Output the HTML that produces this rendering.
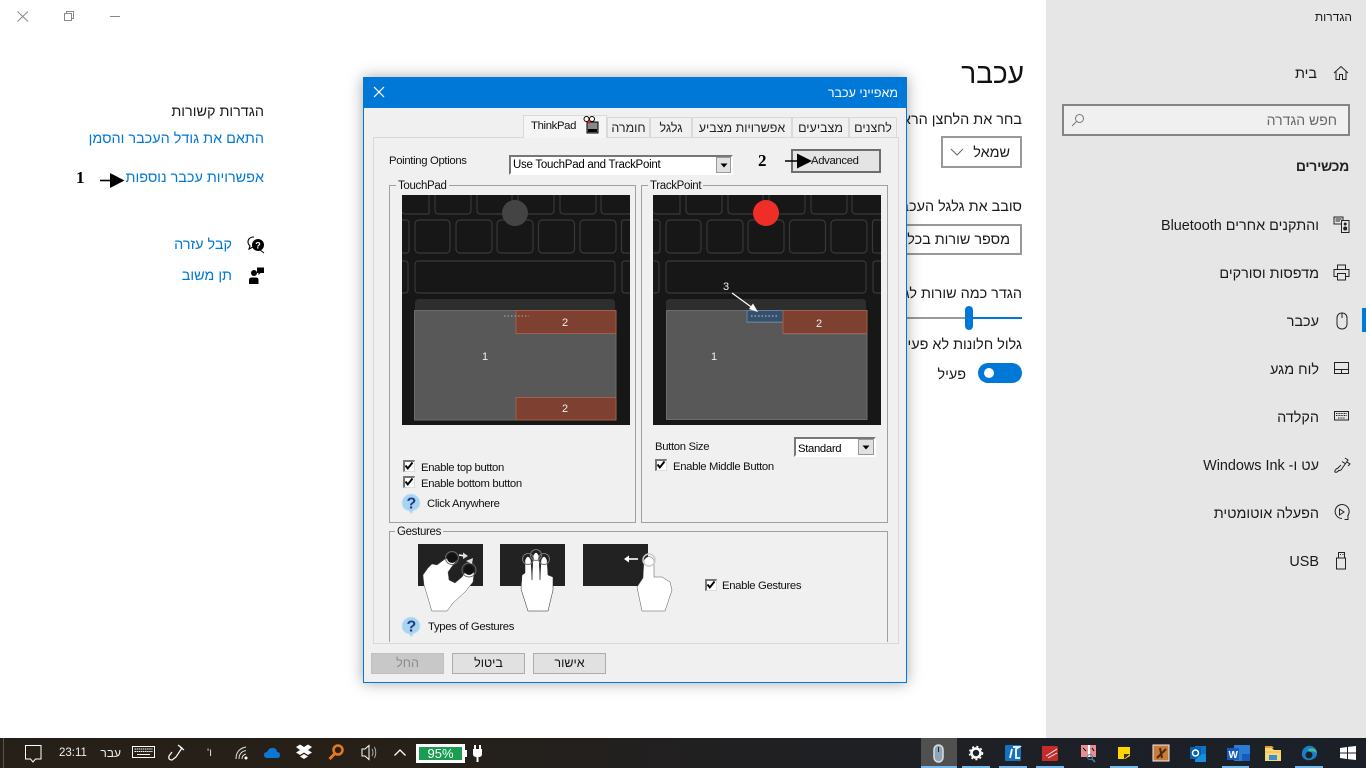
<!DOCTYPE html>
<html lang="he"><head><meta charset="utf-8"><title>הגדרות</title>
<style>
html,body{margin:0;padding:0;width:1366px;height:768px;overflow:hidden;background:#fff}
body{position:relative;font-family:"Liberation Sans","Noto Sans CJK JP",sans-serif;color:#1a1a1a}
.a{position:absolute}
.r,.l{position:absolute;white-space:nowrap;line-height:20px;height:20px}
.r{direction:rtl}
.s{font-size:14.4px;line-height:22px;height:22px}
.b{color:#0078d7}
.d{font-size:11.3px;color:#111;letter-spacing:-.33px;line-height:24px;height:24px}
svg{position:absolute;overflow:visible}
.tab{position:absolute;top:117px;height:20px;background:#f0f0f0;border:1px solid #d9d9d9;border-bottom:0;box-sizing:border-box;font-size:12.5px;line-height:21px;text-align:center;direction:rtl;color:#222;white-space:nowrap}
.grp{position:absolute;border:1px solid #a0a0a0;box-sizing:border-box}
.gl{position:absolute;background:#f0f0f0;font-size:11.5px;line-height:15px;height:15px;padding:1px 2px 0;box-sizing:content-box;color:#111;letter-spacing:-.33px}
.cb{position:absolute;width:12px;height:12px;background:#fff;border:1px solid #777;border-top-width:2px;border-left-width:2px;border-right-color:#ddd;border-bottom-color:#ddd;box-sizing:border-box}
.cb svg{left:-2px;top:-2px}
.btn{position:absolute;top:653px;height:21px;width:73px;background:#e1e1e1;border:1px solid #adadad;box-sizing:border-box;font-size:12.5px;line-height:19px;text-align:center;direction:rtl;color:#111}
.ul{position:absolute;top:766px;height:2px;background:#76b9ed}
</style></head><body>
<svg width="0" height="0" style="position:absolute"><defs>
<g id="kb">
<rect width="228" height="230" fill="#171717"/>
<g fill="none" stroke="#383838" stroke-width="1.2">
<path d="M-1,-2V14Q-1,19 4,19H27V-2"/>
<path d="M33,-2V15Q33,19 37,19H65Q69,19 69,15V-2"/>
<path d="M75,-2V15Q75,19 79,19H106Q110,19 110,15V-2"/>
<path d="M116,-2V15Q116,19 120,19H148Q152,19 152,15V-2"/>
<path d="M158,-2V15Q158,19 162,19H190Q194,19 194,15V-2"/>
<path d="M199,-2V15Q199,19 203,19H230"/>
<path d="M-1,25H4Q7,25 7,28V55Q7,58 4,58H-1"/>
<rect x="13" y="25" width="35" height="33" rx="4"/>
<rect x="54" y="25" width="36" height="33" rx="4"/>
<rect x="95" y="25" width="36" height="33" rx="4"/>
<rect x="136.500" y="25" width="36" height="33" rx="4"/>
<rect x="178" y="25" width="36" height="33" rx="4"/>
<path d="M230,25H222Q219.500,25 219.500,28V55Q219.500,58 222,58H230"/>
<path d="M-1,66H3Q6,66 6,69V95Q6,98 3,98H-1"/>
<rect x="13" y="66" width="200" height="32" rx="3"/>
<path d="M230,66H223Q220,66 220,69V95Q220,98 223,98H230"/>
</g>
<path d="M13,118V108Q13,104 17,104H209Q213,104 213,108V118Z" fill="#2e2e2e"/>
</g>
<g id="q"><path d="M10,1C15,1 19,5 19,10C19,15 15,17 12,18L10.500,21L8,18C3,17 1,14 1,10C1,5 5,1 10,1Z" fill="#a8d4f0" stroke="#cfe6f5" stroke-width=".8"/><text x="5.500" y="15.500" font-family="Liberation Sans" font-weight="bold" font-size="16" fill="#1f3b8c">?</text></g>
<g id="ck"><path d="M2.500,5.500L4.800,8.500L9.500,2.500" fill="none" stroke="#000" stroke-width="1.900"/></g>
</defs></svg>

<!-- window controls -->
<svg style="left:0;top:0" width="130" height="30"><g fill="none" stroke="#8a8a8a"><path d="M17.500,11.500L28,21.500M28,11.500L17.500,21.500"/><rect x="64.500" y="13.500" width="7" height="7"/><path d="M66.500,13.500V11.500H73.500V18.500H71.500"/><path d="M110,16.500H120"/></g></svg>

<!-- related settings -->
<div class="r s" style="right:1102px;top:101px">הגדרות קשורות</div>
<div class="r s b" style="right:1102px;top:128px">התאם את גודל העכבר והסמן</div>
<div class="r s b" style="right:1102px;top:167px">אפשרויות עכבר נוספות</div>
<div class="l" style="left:76px;top:168px;font:bold 17px/20px 'Liberation Serif',serif;color:#000">1</div>
<svg style="left:0;top:0" width="130" height="200"><path d="M100,180.500H112" stroke="#000" stroke-width="1.600"/><path d="M110,173L124.500,180.500L110,188Z"/></svg>
<div class="r s b" style="right:1134px;top:234px">קבל עזרה</div>
<div class="r s b" style="right:1134px;top:265px">תן משוב</div>
<svg style="left:247px;top:236px" width="18" height="18"><path d="M7,1C3,1 1,3 1,6C1,8 2,9 3,10L2,13L6,11" fill="none" stroke="#000" stroke-width="1.100"/><circle cx="11" cy="9" r="6" fill="#000"/><text x="8.300" y="12.500" font-size="9" font-weight="bold" fill="#fff" font-family="Liberation Sans">?</text><path d="M13,14L17,17" stroke="#000"/></svg>
<svg style="left:248px;top:267px" width="18" height="18"><circle cx="6" cy="6" r="3" fill="#000"/><path d="M1,17V13Q1,10.500 4,10.500H8Q10.500,10.500 10.500,13V17Z" fill="#000"/><path d="M9,.5H16V6H12.500L10.500,8V6H9Z" fill="#000"/></svg>

<!-- main content -->
<div class="r" style="right:342px;top:58px;font-size:28px;line-height:32px;height:32px;color:#111">עכבר</div>
<div class="r s" style="right:344px;top:109px">בחר את הלחצן הראשי שלך</div>
<div class="a" style="left:941px;top:136px;width:81px;height:32px;border:2px solid #999;box-sizing:border-box"></div>
<div class="r s" style="right:356px;top:142px">שמאל</div>
<svg style="left:950px;top:148px" width="14" height="8"><path d="M1,1L7,7L13,1" fill="none" stroke="#666" stroke-width="1"/></svg>
<div class="r s" style="right:344px;top:196px">סובב את גלגל העכבר כדי לגלול</div>
<div class="a" style="left:800px;top:224px;width:222px;height:31px;border:2px solid #999;box-sizing:border-box"></div>
<div class="r s" style="right:356px;top:229px">מספר שורות בכל פעם</div>
<div class="r s" style="right:344px;top:283px">הגדר כמה שורות לגלול בכל פעם</div>
<div class="a" style="left:800px;top:317px;width:169px;height:2px;background:#999"></div>
<div class="a" style="left:969px;top:317px;width:53px;height:2px;background:#0078d7"></div>
<div class="a" style="left:965px;top:306px;width:8px;height:24px;background:#0078d7;border-radius:4px"></div>
<div class="r s" style="right:344px;top:334px">גלול חלונות לא פעילים בעת ריחוף</div>
<div class="a" style="left:978px;top:363px;width:44px;height:20px;background:#0078d7;border-radius:10px"></div>
<div class="a" style="left:984px;top:368px;width:10px;height:10px;background:#fff;border-radius:5px"></div>
<div class="r s" style="right:400px;top:364px">פעיל</div>

<!-- sidebar -->
<div class="a" style="left:1046px;top:0;width:320px;height:738px;background:#e6e6e6"></div>
<div class="r" style="right:14px;top:7px;font-size:12px">הגדרות</div>
<svg style="left:1333px;top:65px" width="16" height="16"><path d="M1,8L8,1.500L15,8M3,6.500V14.500H6.500V9.500H9.500V14.500H13V6.500" fill="none" stroke="#222"/></svg>
<div class="r s" style="right:49px;top:63px">בית</div>
<div class="a" style="left:1062px;top:104px;width:288px;height:32px;background:#f0f0f0;border:2px solid #858585;box-sizing:border-box"></div>
<div class="r" style="right:29px;top:110px;font-size:14px;color:#666">חפש הגדרה</div>
<svg style="left:1071px;top:113px" width="14" height="14"><circle cx="8.500" cy="5.500" r="4" fill="none" stroke="#777"/><path d="M5.500,8.500L1,13" stroke="#777"/></svg>
<div class="r" style="right:17px;top:156px;font-size:14px;letter-spacing:-.3px;font-weight:bold;color:#222">מכשירים</div>

<div class="r s" style="right:47px;top:215px">והתקנים אחרים Bluetooth</div>
<div class="r s" style="right:47px;top:263px">מדפסות וסורקים</div>
<div class="r s" style="right:47px;top:311px">עכבר</div>
<div class="r s" style="right:47px;top:359px">לוח מגע</div>
<div class="r s" style="right:47px;top:407px">הקלדה</div>
<div class="r s" style="right:47px;top:455px">עט ו- Windows Ink</div>
<div class="r s" style="right:47px;top:503px">הפעלה אוטומטית</div>
<div class="r s" style="right:47px;top:551px">USB</div>
<div class="a" style="left:1362px;top:308px;width:4px;height:24px;background:#0078d7"></div>
<svg style="left:1333px;top:216px" width="17" height="18"><g fill="none" stroke="#222"><path d="M1,1H10V8H1Z"/><rect x="8.500" y="4.500" width="7.500" height="12" fill="#e6e6e6"/><circle cx="12.200" cy="8" r="1" fill="#222"/><circle cx="12.200" cy="12.500" r="1.500" fill="#222"/></g><path d="M2.500,3H8.500M2.500,5H7" stroke="#222"/></svg>
<svg style="left:1333px;top:264px" width="17" height="17"><g fill="none" stroke="#222"><path d="M4.500,5.500V1H12.500V5.500M4,12.500H1V5.500H16V12.500H13"/><rect x="4.500" y="9.500" width="8" height="6.500"/></g></svg>
<svg style="left:1335px;top:312px" width="14" height="18"><path d="M7,1C10,1 12,3 12,6V12C12,15 10,17 7,17C4,17 2,15 2,12V6C2,3 4,1 7,1ZM7,1V6" fill="none" stroke="#222"/></svg>
<svg style="left:1333px;top:361px" width="17" height="14"><path d="M1.500,1.500H15.500V12.500H1.500ZM1.500,8.500H15.500M8.500,8.500V12.500" fill="none" stroke="#222"/></svg>
<svg style="left:1333px;top:410px" width="17" height="12"><rect x="1.500" y="1.500" width="14" height="8.500" fill="none" stroke="#222"/><path d="M3,3.500H14M3,5.500H14M5,8H12" stroke="#222" stroke-dasharray="1 .6"/></svg>
<svg style="left:1333px;top:456px" width="17" height="18"><path d="M12,2L15,4L8,14L5,15M9,5.500L12,7.500M8,9L5,12Q1,14 2,16Q4,17 6,14M14,6L17,8L15,10" fill="none" stroke="#222"/></svg>
<svg style="left:1333px;top:504px" width="17" height="18"><path d="M9,14.500A7,7 0 1 1 14.500,12M11.500,15.500L15,15.500V11.500" fill="none" stroke="#222"/><path d="M6.500,5L11,8L6.500,11Z" fill="none" stroke="#222"/></svg>
<svg style="left:1335px;top:552px" width="12" height="18"><path d="M3.500,.5H9.500V6H3.500ZM1.500,6H10.500V17H1.500Z" fill="none" stroke="#222"/><path d="M5,2.500H6M7.500,2.500H8.500" stroke="#222"/></svg>

<!-- dialog -->
<div class="a" style="left:363px;top:77px;width:544px;height:606px;background:#f0f0f0;border:1px solid #0078d7;box-sizing:border-box;box-shadow:0 0 14px rgba(0,0,0,.35)"></div>
<div class="a" style="left:364px;top:78px;width:543px;height:30px;background:#0078d7"></div>
<svg style="left:373px;top:86px" width="12" height="12"><path d="M1,1L11,11M11,1L1,11" stroke="#fff" stroke-width="1.200"/></svg>
<div class="r" style="right:468px;top:83px;font-size:12.500px;color:#fff">מאפייני עכבר</div>

<div class="a" style="left:373px;top:137px;width:526px;height:507px;background:#f5f5f5;border:1px solid #d9d9d9;box-sizing:border-box"></div>
<div class="tab" style="left:849px;width:48px">לחצנים</div>
<div class="tab" style="left:792px;width:57px">מצביעים</div>
<div class="tab" style="left:692px;width:100px">אפשרויות מצביע</div>
<div class="tab" style="left:650px;width:42px">גלגל</div>
<div class="tab" style="left:607px;width:43px">חומרה</div>
<div class="a" style="left:523px;top:115px;width:84px;height:23px;background:#f5f5f5;border:1px solid #d9d9d9;border-bottom:0;box-sizing:border-box"></div>
<div class="l d" style="left:531px;top:114px">ThinkPad</div>
<svg style="left:583px;top:116px" width="18" height="18"><rect x="4" y="6" width="11" height="11" fill="#888" stroke="#000"/><circle cx="3.500" cy="3" r="2.500" fill="#fff" stroke="#000"/><circle cx="9" cy="3" r="2.500" fill="#fff" stroke="#000"/><circle cx="6" cy="6" r="1.500" fill="#e02020"/><rect x="5" y="13" width="9" height="3" fill="#000"/></svg>

<div class="a" style="left:374px;top:138px;width:524px;height:505px;background:#f0f0f0"></div>
<div class="l d" style="left:389px;top:149px">Pointing Options</div>
<div class="a" style="left:509px;top:155px;width:224px;height:20px;background:#fff;border:2px solid;border-color:#777 #fff #fff #777;box-sizing:border-box"></div>
<div class="l d" style="left:513px;top:153px;color:#000;font-size:11.500px;letter-spacing:-.26px">Use TouchPad and TrackPoint</div>
<div class="a" style="left:716px;top:157px;width:15px;height:16px;background:#e1e1e1;border:1px solid #999;box-sizing:border-box"></div>
<svg style="left:716px;top:157px" width="16" height="16"><path d="M4.500,6.500H11.500L8,10.500Z"/></svg>
<div class="l" style="left:758px;top:151px;font:bold 17px/20px 'Liberation Serif',serif;color:#000">2</div>
<div class="a" style="left:791px;top:149px;width:90px;height:24px;background:#e4e4e4;border:2px solid #6e6e6e;box-sizing:border-box"></div>
<div class="l d" style="left:811px;top:149px">Advanced</div>
<svg style="left:780px;top:150px" width="40" height="22"><path d="M5,11H20" stroke="#000" stroke-width="1.500"/><path d="M17,3.500L32,11L17,18.500Z"/></svg>

<!-- TouchPad group -->
<div class="grp" style="left:389px;top:185px;width:247px;height:338px"></div>
<div class="gl" style="left:396px;top:178px">TouchPad</div>
<svg style="left:402px;top:195px" width="228" height="230" viewBox="0 0 228 230"><svg width="228" height="230" style="overflow:hidden;position:static"><use href="#kb"/>
<circle cx="113" cy="18" r="13" fill="#444"/>
<path d="M12.500,115.500H214V225H12.500Z" fill="#595858" stroke="#6c6c6c"/>
<rect x="114" y="115.500" width="100" height="23" fill="#7e4030" stroke="#a0604a"/>
<rect x="114" y="202.500" width="100" height="22.500" fill="#7e4030" stroke="#a0604a"/>
<path d="M102,121H127" stroke="#aaa" stroke-dasharray="1.500 2"/>
<g fill="#eee" font-size="11" font-family="Liberation Sans"><text x="80" y="165">1</text><text x="160" y="131">2</text><text x="160" y="217">2</text></g></svg></svg>
<div class="cb" style="left:403px;top:460px"><svg width="12" height="12"><use href="#ck"/></svg></div>
<div class="l d" style="left:421px;top:456px">Enable top button</div>
<div class="cb" style="left:403px;top:476px"><svg width="12" height="12"><use href="#ck"/></svg></div>
<div class="l d" style="left:421px;top:472px">Enable bottom button</div>
<svg style="left:401px;top:493px" width="20" height="22"><use href="#q"/></svg>
<div class="l d" style="left:427px;top:492px">Click Anywhere</div>

<!-- TrackPoint group -->
<div class="grp" style="left:641px;top:185px;width:247px;height:338px"></div>
<div class="gl" style="left:648px;top:178px">TrackPoint</div>
<svg style="left:653px;top:195px" width="228" height="230" viewBox="0 0 228 230"><svg width="228" height="230" style="overflow:hidden;position:static"><use href="#kb"/>
<circle cx="113" cy="18" r="13" fill="#ef2e28"/>
<path d="M13.500,115.500H94V127.500H130V139H214V224.500H13.500Z" fill="#595858" stroke="#6c6c6c"/>
<rect x="94" y="115.500" width="36" height="11.500" fill="#34506e" stroke="#6a7f96"/>
<rect x="130" y="115.500" width="84" height="23" fill="#7e4030" stroke="#a0604a"/>
<path d="M98,121H124" stroke="#ccc" stroke-dasharray="1.500 2"/>
<path d="M79,98L101,114" stroke="#fff" stroke-width="1.200"/><path d="M105,117L96,114L100,108.500Z" fill="#fff"/>
<g fill="#eee" font-size="11" font-family="Liberation Sans"><text x="58" y="165">1</text><text x="163" y="132">2</text><text x="70" y="95">3</text></g></svg></svg>
<div class="l d" style="left:655px;top:435px">Button Size</div>
<div class="a" style="left:794px;top:437px;width:82px;height:20px;background:#fff;border:2px solid;border-color:#777 #fff #fff #777;box-sizing:border-box"></div>
<div class="l d" style="left:798px;top:437px;color:#000">Standard</div>
<div class="a" style="left:858px;top:439px;width:16px;height:16px;background:#e1e1e1;border:1px solid #999;box-sizing:border-box"></div>
<svg style="left:858px;top:439px" width="16" height="16"><path d="M4.500,6.500H11.500L8,10.500Z"/></svg>
<div class="cb" style="left:655px;top:459px"><svg width="12" height="12"><use href="#ck"/></svg></div>
<div class="l d" style="left:673px;top:455px">Enable Middle Button</div>

<!-- Gestures group -->
<div class="a" style="left:389px;top:531px;width:499px;height:111px;border:1px solid #a0a0a0;border-bottom:0;box-sizing:border-box"></div>
<div class="gl" style="left:395px;top:524px">Gestures</div>
<div class="a" style="left:418px;top:544px;width:65px;height:42px;background:#222"></div>
<div class="a" style="left:500px;top:544px;width:65px;height:42px;background:#222"></div>
<div class="a" style="left:583px;top:544px;width:65px;height:42px;background:#222"></div>
<svg style="left:400px;top:535px" width="290" height="80" viewBox="400 535 290 80">
<g fill="#fff" stroke="#555" stroke-width=".5">
<path d="M431.700,611L428,598L424,585L423,575L428,568L432,564L437,565L445,559L453,557L457,560L453,565L448,572L449,580L455,583L462,577L468,568L474,573L473,582L465,592L453,603L447,611Z"/>
<path d="M528,611L521,589L522,575L525,573L525,560Q528,553 531,560L532,580L533,556Q536,549 539,556L540,580L541,560Q544,553 547,560L548,575L553,577L553,590L548,611Z" stroke="#222"/>
<path d="M642,611L637,587L643,578L644,560Q649,553 654,560L654,577L662,577L670,582L672,590L665,611Z"/>
</g>
<g fill="none">
<circle cx="452" cy="558" r="6.500" stroke="#666"/><circle cx="469" cy="570" r="7" stroke="#666"/>
<circle cx="528" cy="559" r="5.500" stroke="#777"/><circle cx="536" cy="555" r="5.500" stroke="#777"/><circle cx="544" cy="559" r="5.500" stroke="#777"/>
<circle cx="649" cy="560" r="6" stroke="#ccc" stroke-width="1.500"/>
</g>
<circle cx="452" cy="558" r="5" fill="#111"/><circle cx="469" cy="570" r="5" fill="#111"/>
<path d="M625,559H638" stroke="#fff" stroke-width="1.600"/><path d="M629,555.500L624,559L629,562.500Z" fill="#fff"/>
<path d="M459,555L465,556" stroke="#fff" stroke-width="1.500"/><path d="M463,552.500L468,556L463,559Z M466,561L473,558L472,564Z" fill="#ddd"/>
</svg>
<div class="cb" style="left:705px;top:579px"><svg width="12" height="12"><use href="#ck"/></svg></div>
<div class="l d" style="left:722px;top:574px">Enable Gestures</div>
<svg style="left:401px;top:616px" width="20" height="22"><use href="#q"/></svg>
<div class="l d" style="left:428px;top:615px">Types of Gestures</div>

<div class="btn" style="left:533px">אישור</div>
<div class="btn" style="left:452px">ביטול</div>
<div class="btn" style="left:371px;background:#c8c8c8;border-color:#c0c0c0;color:#8a8a8a">החל</div>

<!-- taskbar -->
<div class="a" style="left:0;top:738px;width:1366px;height:30px;background:linear-gradient(90deg,#272019 0,#262019 30%,#1f2024 60%,#1b2028 100%)"></div>
<div class="a" style="left:3px;top:738px;width:1px;height:30px;background:#555"></div>
<svg style="left:0;top:738px" width="500" height="30"><g fill="none" stroke="#fff">
<path d="M25.500,7.500H41V21H35.500L33,24L30.500,21H25.500Z"/>
<rect x="132.500" y="8.500" width="22" height="11"/>
<path d="M134.500,11H152.500M134.500,13.500H152.500" stroke-dasharray="1.500 .6"/><path d="M137,16.500H150"/>
<path d="M178,7L182,10L176,19L172,22Q168,22 169,18L172,14M180,9L184,12" stroke-width="1.200"/>
<path d="M362,11H365L369,7.500V21.500L365,18H362Z"/><path d="M372,11Q374,14.500 372,18M374.500,9Q377,14.500 374.500,20" stroke="#aaa"/>
<path d="M394.500,17.500L400,12L405.500,17.500" stroke-width="1.300"/>
<path d="M236,21Q236,11 246,9M239,21Q239,14 246,12.500M242,21Q242,17 246,16" stroke="#ddd"/>
</g>
<circle cx="246" cy="20" r="1.500" fill="#fff"/>
<path d="M268,20Q264,20 264,17Q264,14 267,14Q269,9 274,10Q277,11 277,14Q280,14 280,17Q280,20 277,20Z" fill="#0a78d4"/>
<path d="M296,9L300,6.500L304,9L308,6.500L312,9L308,12L312,14.500L308,17L304,14.500L300,17L296,14.500L300,12ZM300,18.500L304,16L308,18.500L304,21Z" fill="#fff"/>
<circle cx="338" cy="12" r="4.500" fill="none" stroke="#e8791c" stroke-width="2.500"/><path d="M334.500,16L329.500,21" stroke="#e8791c" stroke-width="3"/>
</svg>
<div class="r" style="right:1245px;top:743px;font-size:12px;color:#eee">עבר</div>
<div class="l" style="left:59px;top:743px;font-size:11.500px;color:#eee">23:11</div>
<div class="r" style="right:1154px;top:743px;font-size:11px;color:#ddd">ו'</div>
<div class="a" style="left:416px;top:744px;width:49px;height:19px;background:#1a9d50;border:3px solid #fff;box-sizing:border-box;text-align:center;color:#fff;font-size:13px;line-height:13px">95%</div>
<div class="a" style="left:465px;top:750px;width:2px;height:7px;background:#fff"></div>
<svg style="left:472px;top:744px" width="12" height="20"><path d="M3,1V5M8,1V5" stroke="#fff" stroke-width="2"/><path d="M1,5H10V10Q10,13 6.500,13V18H4.500V13Q1,13 1,10Z" fill="#fff"/></svg>

<div class="a" style="left:921px;top:738px;width:36px;height:30px;background:#505050"></div>
<div class="ul" style="left:921px;width:36px"></div><div class="ul" style="left:962px;width:28px"></div><div class="ul" style="left:999px;width:28px"></div><div class="ul" style="left:1036px;width:28px"></div><div class="ul" style="left:1110px;width:28px"></div><div class="ul" style="left:1222px;width:27px"></div><div class="ul" style="left:1295px;width:28px"></div>
<svg style="left:920px;top:738px" width="446" height="30">
<rect x="14" y="7" width="9" height="17" rx="4.500" fill="#8ba4b8" stroke="#ddd" stroke-width="1.500"/><path d="M18.500,9V14" stroke="#222"/>
<circle cx="56" cy="15" r="4.500" fill="none" stroke="#fff" stroke-width="2.500"/><circle cx="56" cy="15" r="6.500" fill="none" stroke="#fff" stroke-width="1.500" stroke-dasharray="2 2.400"/>
<rect x="85" y="7" width="16" height="16" rx="1" fill="#1572c0"/><path d="M93,9H99L96,11V20H100M92,11L90,20" stroke="#fff" stroke-width="1.800" fill="none"/>
<path d="M122,8H136Q138,8 138,10V21Q138,23 136,23H122Z" fill="#c42b2b"/><path d="M126,18L137,11M128,20L137,15" stroke="#eee"/>
<rect x="161" y="7" width="15" height="12" fill="#fff"/><path d="M161,7H168V19H161ZM170,7H176V19H170Z" fill="#d01c2a" fill-opacity=".5"/><path d="M163,10L166,13M172,10L174,13" stroke="#000"/><circle cx="170" cy="19" r="2.500" fill="none" stroke="#48a" /><path d="M172,21L175,24" stroke="#48a" stroke-width="1.500"/>
<path d="M198,9H210V18L205,21H198Z" fill="#ffd500"/><path d="M204,21V16H210Z" fill="#333"/>
<rect x="233" y="7" width="16" height="16" fill="#c97c34" stroke="#eee"/><path d="M237,20L246,11M240,10L242,20" stroke="#4a2a10" stroke-width="2"/>
<rect x="275" y="8" width="11" height="14" fill="#0a74c8"/><rect x="270" y="9" width="11" height="12" fill="#0a60b0"/><circle cx="275.500" cy="15" r="3" fill="none" stroke="#fff" stroke-width="1.500"/><path d="M282,16H286V24H275V22" fill="#1490df"/>
<rect x="314" y="7" width="16" height="16" rx="1" fill="#2b7cd3"/><rect x="322" y="16" width="8" height="7" fill="#185abd"/><rect x="307" y="10" width="12" height="12" fill="#185abd"/><text x="308.500" y="20" font-size="10" font-weight="bold" fill="#fff" font-family="Liberation Sans">W</text>
<path d="M345,10H352L354,12H361V23H345Z" fill="#f8d775"/><path d="M345,8H352L354,10H345Z" fill="#e0a030"/><path d="M345,14H361" stroke="#f0b840"/><rect x="349" y="17" width="8" height="5" fill="#3a8fd8"/>
<path d="M382,15A7.500,7.500 0 1 1 396,19Q392,23 387,22Q381,20 382,15Z" fill="#1a7fc8"/><path d="M388,11Q396,9 397,15Q393,12 389,14Z" fill="#45c090"/><circle cx="389" cy="17" r="3.500" fill="#1e2026"/>
<path d="M420,10L427,9V14.500H420ZM428,8.900L436,8V14.500H428ZM420,15.500H427V21L420,20ZM428,15.500H436V22L428,21.100Z" fill="#fff"/>
</svg>
</body></html>
